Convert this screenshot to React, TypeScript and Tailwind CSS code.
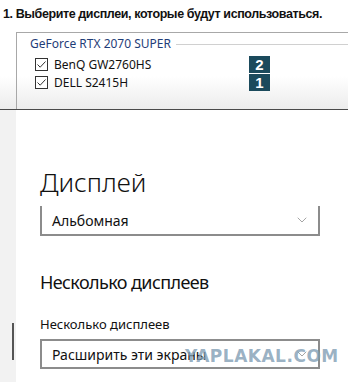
import { ChevronDown } from 'lucide-react'

function CheckBox(): React.ReactNode {
  return (
    <span className="flex h-[13px] w-[13px] items-center justify-center border border-[#333] bg-white">
      <svg viewBox="0 0 11 11" className="h-[11px] w-[11px]" aria-hidden="true">
        <path d="M1.5 5.5 L4.2 8.2 L9.5 2.5" fill="none" stroke="#333" strokeWidth="1" />
      </svg>
    </span>
  )
}

function Badge({ n }: { n: string }): React.ReactNode {
  return (
    <span className="flex h-[17px] w-[21px] items-center justify-center bg-[#1b4a5c] text-[15px] font-bold leading-none text-white [font-family:'Liberation_Sans',sans-serif]">
      {n}
    </span>
  )
}

function Select({ value, top = true }: { value: string; top?: boolean }): React.ReactNode {
  return (
    <div
      className={`flex h-[30px] w-[280px] items-center justify-between border-2 border-[#8c8c8c] pl-[10px] pr-[8px] ${top ? '' : 'border-t-0'}`}
    >
      <span className="text-[14px] text-[#111]">{value}</span>
      <ChevronDown className="h-[16px] w-[16px] text-[#777]" strokeWidth={1} aria-hidden="true" />
    </div>
  )
}

export default function App(): React.ReactNode {
  return (
    <div className="flex h-[382px] w-[348px] flex-col overflow-hidden bg-white [font-family:'Noto_Sans','Open_Sans',sans-serif]">
      <div className="h-[110px] shrink-0 border-b border-[#4a4a4a] bg-gradient-to-b from-white from-70% to-[#ececec]">
        <p className="whitespace-nowrap pl-[3px] pt-[6px] text-[12.5px] font-bold leading-[16px] tracking-[-0.4px] text-[#111] [font-family:'Liberation_Sans',sans-serif]">
          1. Выберите дисплеи, которые будут использоваться.
        </p>
        <div className="ml-[16px] mt-[10px] h-[77px] border-l border-t border-[#a8a8a8] pl-[13px] pt-[3px]">
          <div className="flex items-center gap-[5px]">
            <span className="text-[12px] leading-[16px] text-[#1f3d78]">GeForce RTX 2070 SUPER</span>
            <span className="h-px flex-1 bg-[#d0d0d0]" />
          </div>
          <div className="mt-[4px] flex flex-col">
            <div className="flex h-[17px] items-center">
              <div className="flex w-[219px] items-center gap-[6px] pl-[5px]">
                <CheckBox />
                <span className="text-[12px] text-[#111]">BenQ GW2760HS</span>
              </div>
              <Badge n="2" />
            </div>
            <div className="mt-[1px] flex h-[17px] items-center">
              <div className="flex w-[219px] items-center gap-[6px] pl-[5px]">
                <CheckBox />
                <span className="text-[12px] text-[#111]">DELL S2415H</span>
              </div>
              <Badge n="1" />
            </div>
          </div>
        </div>
      </div>

      <div className="flex flex-1">
        <div className="w-[16px] shrink-0 bg-[#f2f2f2] pl-[12px] pt-[213px]">
          <div className="h-[37px] w-[2px] bg-[#555]" />
        </div>
        <div className="relative flex-1 pl-[24px]">
          <h1 className="mt-[54px] text-[26px] font-light leading-[36px] text-[#111]">Дисплей</h1>
          <div className="mt-[6px]">
            <Select value="Альбомная" top={false} />
          </div>
          <h2 className="mt-[33px] text-[18px] leading-[26px] tracking-[-0.6px] text-[#111]">Несколько дисплеев</h2>
          <p className="mt-[20px] text-[13px] leading-[18px] text-[#111]">Несколько дисплеев</p>
          <div className="mt-[6px]">
            <Select value="Расширить эти экраны" />
          </div>
          <span className="absolute left-[169px] top-[234px] text-[17px] font-extrabold tracking-[0.5px] text-[#7f9db4]/80 [font-family:'DejaVu_Sans',sans-serif]">
            YAPLAKAL.COM
          </span>
        </div>
      </div>
    </div>
  )
}
